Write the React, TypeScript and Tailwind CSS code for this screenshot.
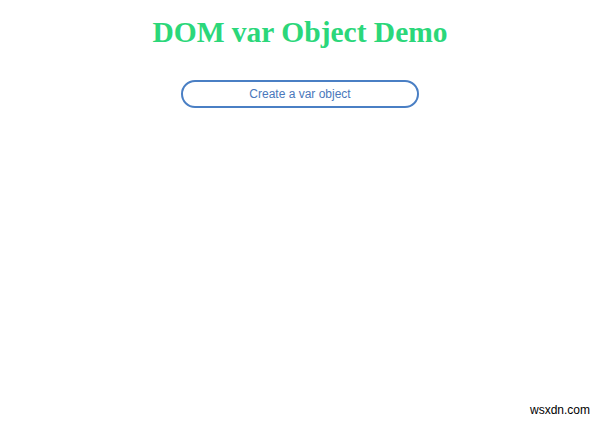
export default function App() {
  return (
    <div className="w-[600px] h-[427px] bg-white relative overflow-hidden">
      <div className="flex flex-col items-center pt-[15px]">
        <h1 className="text-[29.5px] leading-[34px] font-bold text-[#2bd77a] [font-family:'Liberation_Serif',serif]">
          DOM var Object Demo
        </h1>
        <button className="mt-[31px] w-[238px] h-[28px] rounded-full border-2 border-[#4a7fc4] bg-white text-[12px] text-[#4a78bb] [font-family:'Liberation_Sans',Arial,sans-serif]">
          Create a var object
        </button>
      </div>
      <div className="absolute right-[10px] bottom-[8px] text-[12px] text-black [font-family:'Liberation_Sans',Arial,sans-serif]">
        wsxdn.com
      </div>
    </div>
  );
}
